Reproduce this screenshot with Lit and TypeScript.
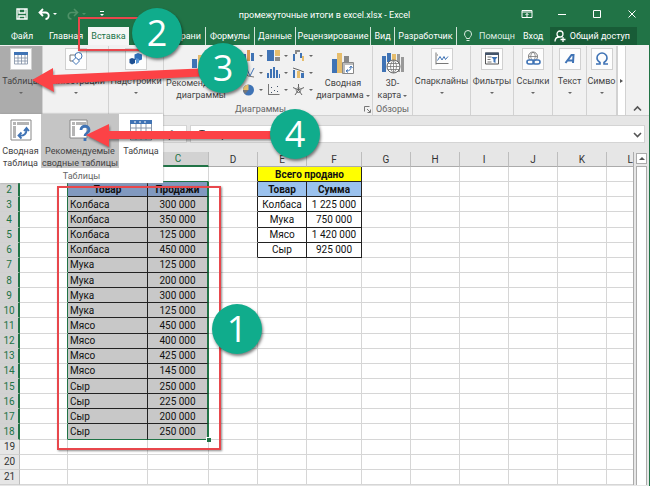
import { LitElement, html, svg, css, nothing } from "lit";
import { customElement, property } from "lit/decorators.js";
import { classMap } from "lit/directives/class-map.js";

const BLUE = "#3f73b5";
const GOLD = "#e6bd6c";
const GRAY = "#777";

const icons: Record<string, unknown> = {
  save: svg`<path d="M1 1h10v10H1z M3 1v4h6V1 M3 11V8h6v3" fill="none" stroke="#fff" stroke-width="1.4"/>`,
  undo: svg`<path d="M5 1L1.500 4.500L5 8 M2 4.500h5.500a3 3 0 0 1 0 6.500" fill="none" stroke="#fff" stroke-width="1.800"/>`,
  redo: svg`<path d="M7 1l3.500 3.500L7 8 M10 4.500H4.500a3 3 0 0 0 0 6.500" fill="none" stroke="#4f9268" stroke-width="1.600"/>`,
  more: svg`<path d="M4 3.500h4" stroke="#fff"/><path d="M4 6h4L6 8z" fill="#fff"/>`,
  ribbonOptions: svg`<path d="M1 2.500h10v7H1z M1 4h10 M6 9V5.500 M4.500 7L6 5.500L7.500 7" fill="none" stroke="#fff"/>`,
  minimize: svg`<path d="M2 6.500h8" stroke="#fff"/>`,
  maximize: svg`<path d="M2.500 2.500h7v7h-7z" fill="none" stroke="#fff"/>`,
  close: svg`<path d="M2.500 2.500l7 7 M9.500 2.500l-7 7" stroke="#fff"/>`,
  bulb: svg`<path d="M4.500 8.500C4.500 7 2.500 6.500 2.500 4a3.500 3.500 0 0 1 7 0C9.500 6.500 7.500 7 7.500 8.500z M4.500 10.500h3" fill="none" stroke="#dcebe1"/>`,
  person: svg`<circle cx="6" cy="4" r="3" fill="none" stroke="#fff" stroke-width="1.300"/><path d="M1 11.500c0-3 2-4.500 4.500-4.500 M9 7v5 M6.500 9.500h5" fill="none" stroke="#fff" stroke-width="1.300"/>`,
  table: svg`<path d="M1 1h14v12H1z" fill="#fff"/><path d="M1 1h14v3H1z" fill="${BLUE}"/><path d="M1.500 4v9h13V4 M1.500 7h13 M1.500 10h13 M5 4v9 M8.500 4v9 M12 4v9" fill="none" stroke="#7f8ea3" stroke-width=".8"/>`,
  shapes: svg`<path d="M2 4h8v6H2z" fill="#fff" stroke="${GRAY}"/><circle cx="10.500" cy="5" r="3.500" fill="#fff" stroke="${BLUE}"/><path d="M8 6.500l3.500 3.500L8 13.500L4.500 10z" fill="#fff" stroke="${BLUE}"/>`,
  addins: svg`<path d="M10 2l4 1.500v5L10 10L6.500 8.500v-5z" fill="#2f6fb8"/><path d="M4 7l3 1v4l-3 1.500L1.500 12V8z" fill="#1d4f91"/><path d="M8 7l3 1v3.500L8 13z" fill="#5b97d6"/>`,
  sparkline: svg`<path d="M2 1.500v12 M2 12.500h12.500 M3 4h1" fill="none" stroke="${GRAY}"/><path d="M3.500 9.500l2.500-4l2 3.500l2-3.500l1.500 3L14 5.500" fill="none" stroke="${BLUE}"/>`,
  filter: svg`<path d="M1.500 2h13v11h-13z" fill="#fff" stroke="#555"/><path d="M1 1.500h14v2.500H1z" fill="#44546a"/><path d="M3.500 6h4 M3.500 8.500h3 M3.500 11h4" stroke="${GRAY}"/><path d="M7.500 6h6l-2 2.500V12l-2-1V8.500z" fill="${BLUE}"/>`,
  link: svg`<circle cx="8" cy="5.500" r="4.500" fill="#fff" stroke="${GRAY}"/><path d="M3.500 5.500h9 M8 1c-3 2.500-3 6 0 9c3-3 3-6.500 0-9" fill="none" stroke="${GRAY}" stroke-width=".8"/><rect x="2" y="9" width="7" height="4" rx="2" fill="#fff" stroke="${BLUE}" stroke-width="1.600"/><rect x="8" y="9" width="7" height="4" rx="2" fill="none" stroke="${BLUE}" stroke-width="1.600"/>`,
  wordArt: svg`<path d="M3.500 12L9.500 4h2L11 12 M6 9.500h5" fill="none" stroke="${BLUE}" stroke-width="2"/>`,
  omega: svg`<path d="M2 13h4v-1.500C3.500 10 3 8.500 3 7a5 5 0 0 1 10 0c0 1.500-.5 3-3 4.500V13h4" fill="none" stroke="${BLUE}" stroke-width="1.600"/>`,
  recCharts: svg`<path d="M2 5h5v9H2z" fill="${BLUE}"/><path d="M8 1h5v15H8z" fill="${GOLD}"/><path d="M14 7h5v9h-5z" fill="#888"/>`,
  column: svg`<path d="M1 5h3v7H1z M9 4h3v8H9z" fill="${BLUE}"/><path d="M5 1h3v11H5z" fill="#dd9a54"/>`,
  tree: svg`<path d="M0 1h7v11H0z" fill="${BLUE}"/><path d="M8 1h5v6H8z" fill="${GOLD}"/><path d="M8 8h5v4H8z" fill="#8b8b8b"/>`,
  waterfall: svg`<path d="M1 5h2v7H1z M8 4h2v5H8z" fill="${BLUE}"/><path d="M3 1h5v2H5v2H3z" fill="#888"/><path d="M10 7h2v5h-2z" fill="${GOLD}"/>`,
  line: svg`<path d="M1 11l4-8l3 7l4-8" fill="none" stroke="${BLUE}"/><path d="M1 3l5 7l6 1" fill="none" stroke="${GRAY}"/>`,
  histogram: svg`<path d="M0 7h2v5H0z M3 3h2v9H3z M6 1h2v11H6z M9 4h2v8H9z M12 8h1v4h-1z" fill="${BLUE}"/>`,
  combo: svg`<path d="M1 4h2v8H1z M9 7h3v5H9z" fill="${BLUE}"/><path d="M5 5h3v7H5z" fill="${GOLD}"/><path d="M1 2l6 2l5 2" fill="none" stroke="#666"/>`,
  pie: svg`<circle cx="6.500" cy="7" r="5.500" fill="${BLUE}"/><path d="M6.500 7V1.500A5.500 5.500 0 0 0 1 7z" fill="${GOLD}"/><path d="M6.500 7H1a5.500 5.500 0 0 0 2 4z" fill="#777"/>`,
  scatter: svg`<path d="M1.500 1v11 M1 11.500h11.500" stroke="${GRAY}"/><path d="M4 4h1v1H4z M7 7h1v1H7z M10 3h1v1h-1z M4 9h1v1H4z M10 8h1v1h-1z" fill="#44546a"/>`,
  radar: svg`<path d="M6.500 1v6L1 4.500 M6.500 7L12 4.500 M6.500 7L3 12 M6.500 7l3.500 5" fill="none" stroke="#666"/><path d="M6.500 4L9 6.500L8 9.500H5L4 6.500z" fill="none" stroke="#888"/>`,
  pivotChart: svg`<path d="M1 7h5v14H1z" fill="${BLUE}"/><path d="M6 1h5v20H6z" fill="${GOLD}"/><path d="M13 4h5v10h-5z" fill="#888"/><path d="M11.500 10.500h11v11h-11z" fill="#fff" stroke="#888"/><path d="M12 11h10v2H12z M12 11h2v10h-2z" fill="#bbb"/><path d="M15.500 19c3 0 4.500-1.500 4.500-4 M18.500 16l1.500-2l1.500 2 M17 17.500l-2 1.500l2 1.500" fill="none" stroke="${BLUE}"/>`,
  map: svg`<path d="M1 4h4v16H1z M6 1h4v9H6z" fill="${BLUE}"/><path d="M11 2h4v9h-4z" fill="${GOLD}"/><path d="M16 2h3v18h-3z M20 5h3v15h-3z" fill="#999"/><circle cx="12.500" cy="14.500" r="6.500" fill="#fff" stroke="#666"/><path d="M6 14.500h13 M12.500 8v13 M7 11.500h11 M7 17.500h11 M12.500 8c-4 4-4 9 0 13c4-4 4-9 0-13" fill="none" stroke="#777" stroke-width=".8"/>`,
  pivotTable: svg`<path d="M1 1h20v20H1z" fill="#fff" stroke="#888"/><path d="M3 3h3v3H3z M7 3h12v3H7z M3 7h3v12H3z" fill="#b4b4b4"/><path d="M9 16.500c5 1 8-2 7.500-7 M14 12l2.500-3l2.500 3 M11.500 13.500l-3 3l3 3" fill="none" stroke="${BLUE}" stroke-width="1.800"/>`,
  recPivot: svg`<path d="M1 1h17v18H1z" fill="#fff" stroke="#888"/><path d="M3 3h3v3H3z M7 3h10v3H7z M3 7h3v10H3z" fill="#b4b4b4"/><path d="M12 11c0-5 8-5 8 0c0 3-4 3-4 6 M16 19v3" fill="none" stroke="${BLUE}" stroke-width="2.800"/>`,
  bigTable: svg`<path d="M1 1h20v20H1z" fill="#fff"/><path d="M0 1h22v4H0z" fill="${BLUE}"/><path d="M4 3h2 M9 3h2 M14 3h2" stroke="#fff"/><path d="M.5 5v16h21V5 M.5 9h21 M.5 13h21 M.5 17h21 M6 5v16 M11 5v16 M16 5v16" fill="none" stroke="#8796ab"/>`,
  launcher: svg`<path d="M.5 5.500v-5h5 M3 3l3 3 M6.500 3.500v3h-3" fill="none" stroke="#777"/>`,
  up: svg`<path d="M2 7.500l3.500-3.500L9 7.500" fill="none" stroke="#555" stroke-width="1.600"/>`,
  down: svg`<path d="M2 4l3.500 3.500L9 4" fill="none" stroke="#555" stroke-width="1.600"/>`,
};

const icon = (name: string, size: number) =>
  html`<svg width=${size} height=${size} viewBox="0 0 ${size} ${size}" aria-hidden="true">${icons[name]}</svg>`;

const chartTypes: [string, string][] = [
  ["column", "Гистограмма"],
  ["tree", "Иерархическая"],
  ["waterfall", "Каскадная"],
  ["line", "График"],
  ["histogram", "Статистическая"],
  ["combo", "Комбинированная"],
  ["pie", "Круговая"],
  ["scatter", "Точечная"],
  ["radar", "Лепестковая"],
];

const goods: [string, string][] = [
  ["Колбаса", "300 000"],
  ["Колбаса", "350 000"],
  ["Колбаса", "125 000"],
  ["Колбаса", "450 000"],
  ["Мука", "125 000"],
  ["Мука", "200 000"],
  ["Мука", "300 000"],
  ["Мука", "125 000"],
  ["Мясо", "450 000"],
  ["Мясо", "400 000"],
  ["Мясо", "425 000"],
  ["Мясо", "145 000"],
  ["Сыр", "250 000"],
  ["Сыр", "225 000"],
  ["Сыр", "200 000"],
  ["Сыр", "250 000"],
];

const totals: [string, string][] = [
  ["Колбаса", "1 225 000"],
  ["Мука", "750 000"],
  ["Мясо", "1 420 000"],
  ["Сыр", "925 000"],
];

const button = css`
  button {
    border: 0;
    padding: 0;
    margin: 0;
    background: none;
    font: inherit;
    color: inherit;
  }
  svg {
    display: block;
    flex: none;
  }
`;

@customElement("title-bar")
export class TitleBar extends LitElement {
  static styles = [
    button,
    css`
      :host {
        display: grid;
        grid-template-columns: 1fr auto 1fr;
        align-items: center;
        height: 27px;
        background: #217346;
        color: #fff;
      }
      .quick,
      .controls {
        display: flex;
        align-items: center;
      }
      .quick {
        padding-left: 16px;
        gap: 10px;
      }
      .pair {
        display: flex;
        align-items: center;
        gap: 3px;
      }
      .arrow {
        border: 2px solid transparent;
        border-top-color: #fff;
        border-bottom: 0;
      }
      .dim .arrow {
        border-top-color: #4f9268;
      }
      .controls {
        justify-content: flex-end;
      }
      .controls button {
        width: 35px;
        display: flex;
        justify-content: center;
      }
      .title {
        font-size: 9px;
        padding-top: 2px;
      }
    `,
  ];
  render() {
    return html`
      <div class="quick">
        <button aria-label="Сохранить">${icon("save", 12)}</button>
        <button class="pair" aria-label="Отменить">${icon("undo", 12)}<span class="arrow"></span></button>
        <button class="pair dim" aria-label="Вернуть">${icon("redo", 12)}<span class="arrow"></span></button>
        <button aria-label="Настройка панели">${icon("more", 12)}</button>
      </div>
      <div class="title">промежуточные итоги в excel.xlsx - Excel</div>
      <div class="controls">
        <button aria-label="Параметры ленты">${icon("ribbonOptions", 12)}</button>
        <button aria-label="Свернуть">${icon("minimize", 12)}</button>
        <button aria-label="Развернуть">${icon("maximize", 12)}</button>
        <button aria-label="Закрыть">${icon("close", 12)}</button>
      </div>
    `;
  }
}

@customElement("ribbon-tabs")
export class RibbonTabs extends LitElement {
  static styles = [
    button,
    css`
      :host {
        display: flex;
        height: 18px;
        background: #217346;
        color: #fff;
        font-size: 9px;
      }
      nav {
        display: grid;
        grid-template-columns: 44px 44px 41px 77px 49px 41px 75px 24px 62px;
      }
      nav button {
        white-space: nowrap;
      }
      .active {
        background: #f6f6f6;
        color: #217346;
      }
      .line {
        border-right: 1px solid #cfe3d7;
      }
      .cut {
        text-align: right;
        padding-right: 4px;
      }
      .tell {
        display: flex;
        align-items: center;
        gap: 5px;
        padding-left: 5px;
        color: #dcebe1;
      }
      .login {
        padding-left: 8px;
      }
      .share {
        display: flex;
        align-items: center;
        gap: 3px;
        margin-left: auto;
        margin-right: 12px;
        padding: 0 7px 0 4px;
        background: #185c37;
        white-space: nowrap;
      }
    `,
  ];
  render() {
    return html`
      <nav>
        <button>Файл</button>
        <button>Главная</button>
        <button class="active" aria-current="page">Вставка</button>
        <button class="line cut">страни</button>
        <button class="line">Формулы</button>
        <button class="line">Данные</button>
        <button class="line">Рецензирование</button>
        <button class="line">Вид</button>
        <button class="line">Разработчик</button>
      </nav>
      <button class="tell">${icon("bulb", 12)}<span>Помощн</span></button>
      <button class="login">Вход</button>
      <button class="share">${icon("person", 13)}Общий доступ</button>
    `;
  }
}

@customElement("ribbon-group")
export class RibbonGroup extends LitElement {
  @property() icon = "";
  @property() label = "";
  @property({ type: Boolean }) open = false;
  static styles = [
    button,
    css`
      :host {
        display: flex;
        border-right: 1px solid #d2d2d2;
      }
      button {
        flex: 1;
        display: flex;
        flex-direction: column;
        align-items: center;
        padding-top: 2px;
        white-space: nowrap;
        min-width: 0;
      }
      .open {
        background: #acacac;
      }
      .box {
        display: grid;
        place-items: center;
        width: 20px;
        height: 20px;
        border: 1px solid #d0d0d0;
        background: #fdfdfd;
      }
      .text {
        margin-top: 5px;
        line-height: 12px;
      }
      .arrow {
        margin-top: 5px;
        border: 2px solid transparent;
        border-top-color: #666;
        border-bottom: 0;
      }
    `,
  ];
  render() {
    return html`<button class=${classMap({ open: this.open })} aria-expanded=${this.open ? "true" : "false"}>
      <span class="box">${icon(this.icon, 16)}</span>
      <span class="text">${this.label}</span>
      <span class="arrow"></span>
    </button>`;
  }
}

@customElement("excel-ribbon")
export class ExcelRibbon extends LitElement {
  static styles = [
    button,
    css`
      :host {
        position: relative;
        display: grid;
        grid-template-columns: 43px 66px 55px 1fr 40px 58px 43px 39px 34px 30px 9px 23px;
        height: 69px;
        padding-top: 1px;
        background: #f1f1f1;
        border-bottom: 1px solid #d0d0d0;
        color: #444;
        font-size: 9px;
      }
      .charts,
      .tours {
        display: grid;
        grid-template-rows: 1fr 12px;
        border-right: 1px solid #d2d2d2;
        min-width: 0;
      }
      .charts {
        grid-template-columns: 74px 1fr 60px;
      }
      .big {
        display: flex;
        flex-direction: column;
        align-items: center;
        justify-content: flex-end;
        gap: 1px;
        line-height: 12px;
        padding-bottom: 2px;
        white-space: nowrap;
      }
      .types {
        display: grid;
        grid-template-columns: repeat(3, 25px);
        grid-template-rows: repeat(3, 17px);
        justify-content: end;
        align-items: center;
        padding-top: 1px;
      }
      .types button {
        display: flex;
        align-items: center;
        justify-content: flex-end;
        gap: 4px;
      }
      .arrow {
        display: inline-block;
        border: 2px solid transparent;
        border-top-color: #666;
        border-bottom: 0;
        vertical-align: middle;
      }
      .caption {
        color: #666;
        text-align: center;
        line-height: 12px;
      }
      .charts .caption {
        grid-column: 1 / 4;
        display: flex;
        align-items: center;
        justify-content: flex-end;
        gap: 78px;
        padding-right: 2px;
      }
      .scroll {
        background: #fff;
        border-left: 1px solid #d2d2d2;
        border-right: 1px solid #d2d2d2;
        display: grid;
        place-items: start center;
        padding-top: 33px;
        z-index: 1;
      }
      .scroll span {
        border: 2px solid transparent;
        border-left: 3px solid #555;
        border-right: 0;
      }
      .collapse {
        display: grid;
        place-items: end center;
        padding-bottom: 1px;
      }
      .menu {
        position: absolute;
        left: 0;
        top: 69px;
        z-index: 2;
        display: grid;
        grid-template-columns: 41px 78px 44px;
        grid-template-rows: 54px 15px;
        background: #fff;
        box-shadow: 0 0 2px #999;
      }
      .menu button {
        display: flex;
        flex-direction: column;
        align-items: center;
        gap: 4px;
        padding-top: 5px;
        line-height: 12px;
        white-space: nowrap;
      }
      .menu .hot {
        background: #c5c5c5;
      }
      .menu .caption {
        grid-column: 1 / 4;
        line-height: 17px;
      }
    `,
  ];
  render() {
    return html`
      <ribbon-group icon="table" label="Таблицы" open></ribbon-group>
      <ribbon-group icon="shapes" label="Иллюстрации"></ribbon-group>
      <ribbon-group icon="addins" label="Надстройки"></ribbon-group>
      <section class="charts">
        <button class="big">${icon("recCharts", 22)}<span>Рекомендуемые<br />диаграммы</span></button>
        <div class="types">
          ${chartTypes.map(
            ([name, label]) =>
              html`<button aria-label=${label}>${icon(name, 13)}<span class="arrow"></span></button>`,
          )}
        </div>
        <button class="big">${icon("pivotChart", 24)}<span>Сводная<br />диаграмма <span class="arrow"></span></span></button>
        <div class="caption"><span>Диаграммы</span>${icon("launcher", 7)}</div>
      </section>
      <section class="tours">
        <button class="big">${icon("map", 24)}<span>3D-<br />карта <span class="arrow"></span></span></button>
        <div class="caption">Обзоры</div>
      </section>
      <ribbon-group icon="sparkline" label="Спарклайны"></ribbon-group>
      <ribbon-group icon="filter" label="Фильтры"></ribbon-group>
      <ribbon-group icon="link" label="Ссылки"></ribbon-group>
      <ribbon-group icon="wordArt" label="Текст"></ribbon-group>
      <ribbon-group icon="omega" label="Симво"></ribbon-group>
      <button class="scroll" aria-label="Прокрутить ленту"><span></span></button>
      <button class="collapse" aria-label="Свернуть ленту">${icon("up", 11)}</button>
      <div class="menu">
        <button>${icon("pivotTable", 22)}<span>Сводная<br />таблица</span></button>
        <button class="hot">${icon("recPivot", 22)}<span>Рекомендуемые<br />сводные таблицы</span></button>
        <button>${icon("bigTable", 22)}<span>Таблица</span></button>
        <div class="caption">Таблицы</div>
      </div>
    `;
  }
}

@customElement("formula-bar")
export class FormulaBar extends LitElement {
  static styles = css`
    :host {
      display: flex;
      gap: 3px;
      padding: 9px 4px 9px 0;
      background: #e6e6e6;
    }
    .name {
      width: 187px;
      padding-right: 10px;
      text-align: right;
      font: italic 10px/17px "Liberation Serif", serif;
    }
    .name,
    .entry {
      box-sizing: border-box;
      height: 18px;
      background: #fff;
      border: 1px solid #d4d4d4;
    }
    .entry {
      flex: 1;
      display: flex;
      align-items: center;
      padding-right: 1px;
    }
    input {
      flex: 1;
      min-width: 0;
      border: 0;
      padding: 0 8px;
      background: none;
      font: 10px Roboto, sans-serif;
      color: #333;
    }
  `;
  render() {
    return html`
      <div class="name">fx</div>
      <div class="entry"><input aria-label="Строка формул" .value=${"Товар"} />${icon("down", 11)}</div>
    `;
  }
}

@customElement("work-sheet")
export class WorkSheet extends LitElement {
  static styles = [
    button,
    css`
      :host {
        display: flex;
        gap: 2px;
        padding: 0 2px 1px 0;
        background: #e6e6e6;
      }
      .grid {
        flex: 1;
        display: grid;
        background: #fff;
        border-right: 1px solid #ababab;
      }
      table {
        width: 100%;
        height: 100%;
        table-layout: fixed;
        border-spacing: 0;
        font-family: Roboto, sans-serif;
        font-size: 10px;
        line-height: 13px;
        color: #111;
      }
      .c-head {
        width: 20px;
      }
      .c-std {
        width: 49px;
      }
      .c-a {
        width: 48px;
      }
      .c-b {
        width: 80px;
      }
      .c-c {
        width: 61px;
      }
      .c-f {
        width: 55px;
      }
      th,
      td {
        height: 14px;
        padding: 0;
        border: 0 solid #d6d6d6;
        border-width: 0 1px 1px 0;
        font-weight: normal;
        text-align: center;
        white-space: nowrap;
        overflow: hidden;
      }
      th {
        background: #e6e6e6;
        color: #333;
        border-color: #bdbdbd;
      }
      thead th {
        border-bottom-color: #ababab;
      }
      tbody th {
        border-bottom-color: #d0d0d0;
      }
      th.on {
        background: #d2d2d2;
        color: #217346;
      }
      thead th.on {
        border-bottom: 2px solid #217346;
        height: 13px;
      }
      tbody th.on {
        border-right: 2px solid #217346;
      }
      .last {
        text-align: right;
        border-right: 0;
      }
      .data {
        border-color: #222;
      }
      .sel {
        background: #c8c8c8;
      }
      .left {
        text-align: left;
        padding-left: 2px;
      }
      .right-green {
        border-right: 2px solid #217346;
      }
      .left-green {
        border-right: 1px solid #217346;
      }
      .bottom-green {
        border-bottom: 1px solid #217346;
      }
      .left-dark {
        border-right-color: #222;
      }
      .bold {
        font-weight: bold;
      }
      .shaded {
        background: #8199bf;
      }
      .blue {
        background: #9bc2ee;
      }
      .yellow {
        background: #ffff00;
      }
      .scroll {
        width: 11px;
        display: flex;
        flex-direction: column;
        gap: 2px;
        padding-top: 1px;
      }
      .scroll button {
        height: 11px;
        display: grid;
        place-items: center;
        background: #fff;
        border: 1px solid #ababab;
      }
      .scroll span {
        border: 3px solid transparent;
        border-bottom-color: #555;
        border-top: 0;
      }
      .track {
        flex: 1;
        background: #fff;
        border: 1px solid #ababab;
        border-bottom: 0;
      }
    `,
  ];

  private left(row: number) {
    const inside = row >= 2 && row <= 18;
    const cells =
      row === 2 ? ["Товар", "Продажи"] : inside ? goods[row - 3] : ["", ""];
    const base = {
      data: inside,
      sel: inside && row > 2,
      shaded: row === 2,
      bold: row === 2,
      "bottom-green": row === 1 || row === 18,
    };
    return html`
      <td class=${classMap({ "left-green": inside })}></td>
      <td class=${classMap({ ...base, left: inside && row > 2 })}>${cells[0]}</td>
      <td class=${classMap({ ...base, "right-green": inside })}>${cells[1]}</td>
    `;
  }

  private right(row: number) {
    const d = classMap({ "left-dark": row <= 6 });
    if (row === 1)
      return html`<td class=${d}></td><td class="data yellow bold" colspan="2">Всего продано</td>`;
    if (row === 2)
      return html`<td class=${d}></td><td class="data blue bold">Товар</td><td class="data blue bold">Сумма</td>`;
    const cells = totals[row - 3];
    const c = classMap({ data: !!cells });
    return html`<td class=${d}></td><td class=${c}>${cells?.[0] ?? nothing}</td><td class=${c}>${cells?.[1] ?? nothing}</td>`;
  }

  render() {
    const letters = "ABCDEFGHIJKL".split("");
    const widths: Record<string, string> = { A: "c-a", B: "c-b", C: "c-c", F: "c-f", L: "" };
    return html`
      <div class="grid">
        <table>
          <colgroup>
            <col class="c-head" />
            ${letters.map((l) => html`<col class=${widths[l] ?? "c-std"} />`)}
          </colgroup>
          <thead>
            <tr>
              <th></th>
              ${letters.map(
                (l) => html`<th scope="col" class=${classMap({ on: l === "B" || l === "C", last: l === "L" })}>${l}</th>`,
              )}
            </tr>
          </thead>
          <tbody>
            ${Array.from({ length: 21 }, (_, i) => i + 1).map(
              (row) => html`<tr>
                <th scope="row" class=${classMap({ on: row >= 2 && row <= 18 })}>${row}</th>
                ${this.left(row)}${this.right(row)}
                <td></td><td></td><td></td><td></td><td></td><td class="last"></td>
              </tr>`,
            )}
          </tbody>
        </table>
      </div>
      <div class="scroll">
        <button aria-label="Прокрутить вверх"><span></span></button>
        <div class="track"></div>
      </div>
    `;
  }
}

@customElement("step-marks")
export class StepMarks extends LitElement {
  static styles = css`
    :host {
      position: absolute;
      inset: 0;
      z-index: 3;
      pointer-events: none;
      overflow: hidden;
    }
    .arrows {
      position: absolute;
      left: 0;
      top: 0;
      filter: drop-shadow(1px 2px 1px rgb(0 0 0 / 40%));
    }
    .frame,
    .handle {
      position: absolute;
      box-sizing: border-box;
    }
    .frame {
      border: 2px solid #e8474c;
      box-shadow: 1px 1px 2px rgb(0 0 0 / 45%);
    }
    .frame-tab {
      left: 78px;
      top: 17px;
      width: 72px;
      height: 34px;
    }
    .frame-range {
      left: 57px;
      top: 186px;
      width: 164px;
      height: 264px;
    }
    .handle {
      left: 206px;
      top: 437px;
      width: 5px;
      height: 5px;
      background: #217346;
      border: 1px solid #fff;
      border-width: 1px 0 0 1px;
    }
    .step {
      position: absolute;
      width: 50px;
      height: 50px;
      border-radius: 50%;
      background: #10ac8c;
      color: #fff;
      font: 36px/50px "Open Sans", sans-serif;
      text-align: center;
      box-shadow: 1px 2px 3px rgb(0 0 0 / 50%);
    }
    .one {
      left: 212px;
      top: 304px;
    }
    .two {
      left: 132px;
      top: 8px;
    }
    .three {
      left: 198px;
      top: 43px;
    }
    .four {
      left: 270px;
      top: 109px;
    }
  `;
  render() {
    return html`
      <div class="frame frame-tab"></div>
      <div class="frame frame-range"></div>
      <div class="handle"></div>
      <svg class="arrows" width="330" height="170" viewBox="0 0 330 170" aria-hidden="true">
        <path d="M32 80L53 68V75L210 68V76L53 84L54 92z" fill="#fc4246" />
        <path d="M86 135L109 124V131H290V139H109V147z" fill="#fc4246" />
      </svg>
      <div class="step one">1</div>
      <div class="step two">2</div>
      <div class="step three">3</div>
      <div class="step four">4</div>
    `;
  }
}

@customElement("app-root")
export class AppRoot extends LitElement {
  static styles = css`
    :host {
      position: relative;
      display: flex;
      flex-direction: column;
      min-height: 100vh;
      box-sizing: border-box;
      border-right: 1px solid #217346;
      background: #e6e6e6;
      font-family: Roboto, sans-serif;
    }
    work-sheet {
      flex: 1;
    }
  `;
  render() {
    return html`
      <title-bar></title-bar>
      <ribbon-tabs></ribbon-tabs>
      <excel-ribbon></excel-ribbon>
      <formula-bar></formula-bar>
      <work-sheet></work-sheet>
      <step-marks></step-marks>
    `;
  }
}
